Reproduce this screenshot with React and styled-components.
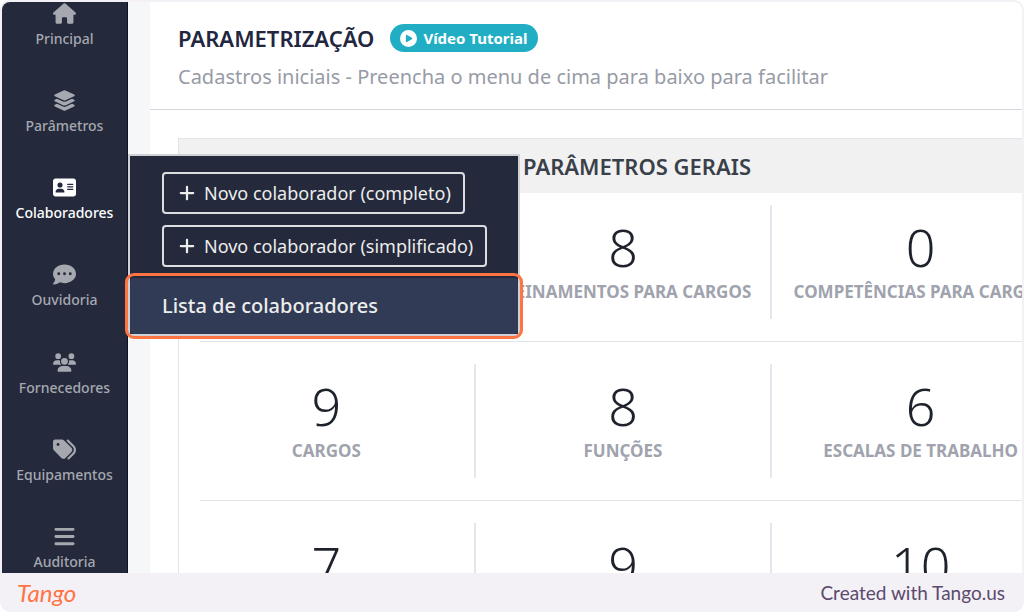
import React from "react";
import styled, { createGlobalStyle, css } from "styled-components";
import {
  FaAddressCard,
  FaBars,
  FaCirclePlay,
  FaCommentDots,
  FaHouse,
  FaLayerGroup,
  FaPlus,
  FaTags,
  FaUsers,
} from "react-icons/fa6";

const GlobalStyle = createGlobalStyle`
  * {
    box-sizing: border-box;
  }

  body {
    margin: 0;
    background: #fff;
    font-family: "Noto Sans", "Open Sans", sans-serif;
  }
`;

const Frame = styled.div`
  display: flex;
  flex-direction: column;
  height: 100vh;
  padding: 2px 2px 0;
  border-radius: 10px;
  overflow: hidden;
  background: #f3f0f6;
`;

const Screen = styled.div`
  position: relative;
  display: flex;
  flex: 1;
  min-height: 0;
  border-radius: 8px 8px 0 0;
  overflow: hidden;
  background: #f5f7f9;
`;

const Sidebar = styled.nav`
  display: flex;
  flex-direction: column;
  justify-content: space-between;
  flex: none;
  width: 126px;
  padding-bottom: 1px;
  background: #24293b;
  border-right: 1px solid #0d1130;
`;

const SidebarLink = styled.a`
  display: flex;
  flex-direction: column;
  align-items: center;
  gap: 4px;
  color: ${(props) => (props.$active ? "#fff" : "#a6a8b0")};
  font-size: 14px;
  font-weight: 500;
  line-height: 20px;
  text-decoration: none;

  svg {
    width: auto;
    height: 23px;
  }
`;

const Main = styled.main`
  flex: 1;
  min-width: 0;
  margin-left: 22px;
  overflow: hidden;
  background: #fff;
`;

const PageHeader = styled.header`
  padding: 22px 28px 18px;
  border-bottom: 1px solid #d3d6dc;
`;

const TitleRow = styled.div`
  display: flex;
  align-items: center;
  gap: 16px;
`;

const Title = styled.h1`
  margin: 0;
  color: #22263f;
  font-size: 22px;
  font-weight: 600;
  line-height: 28px;
`;

const TutorialButton = styled.button`
  display: flex;
  align-items: center;
  gap: 6px;
  height: 28px;
  padding: 0 10px;
  border: 0;
  border-radius: 14px;
  background: #21aec4;
  color: #fff;
  font-family: inherit;
  font-size: 15px;
  font-weight: 700;

  svg {
    width: 17px;
    height: 17px;
  }
`;

const Subtitle = styled.p`
  margin: 11px 0 0;
  color: #979ba6;
  font-size: 20px;
  line-height: 28px;
`;

const Card = styled.section`
  margin: 28px -74px 0 28px;
  border: 1px solid #e2e4ea;
`;

const CardTitle = styled.h2`
  margin: 0 0 12px;
  background: #f1f1f1;
  color: #3a4049;
  font-size: 22px;
  font-weight: 600;
  line-height: 54px;
  text-align: center;
`;

const StatRow = styled.div`
  display: grid;
  grid-template-columns: repeat(3, 1fr);
  padding-right: 26px;
`;

const Divider = styled.hr`
  margin: 22px 0 22px 21px;
  border: 0;
  border-top: 1px solid #e2e3e7;
`;

const Stat = styled.a`
  display: flex;
  flex-direction: column;
  align-items: center;
  height: 114px;
  padding-top: 12px;
  border-right: 2px solid #e6e7ee;
  text-decoration: none;
  white-space: nowrap;

  &:last-child {
    border-right: 0;
  }
`;

const StatValue = styled.span`
  color: #1e222b;
  font-size: 52px;
  font-weight: 350;
  line-height: 60px;
`;

const StatLabel = styled.span`
  margin-top: 2px;
  color: #a0a3ae;
  font-size: 17px;
  font-weight: 700;
  line-height: 26px;
`;

const Flyout = styled.div`
  position: absolute;
  top: 152px;
  left: 126px;
  width: 392px;
  border: 2px solid #cfd1d6;
  background: #24293b;
`;

const FlyoutActions = styled.div`
  display: flex;
  flex-direction: column;
  align-items: flex-start;
  gap: 11px;
  padding: 16px 32px 11px;
`;

const flyoutText = css`
  color: #eceded;
  font-family: inherit;
`;

const NewButton = styled.button`
  ${flyoutText}
  display: flex;
  align-items: center;
  gap: 8px;
  height: 42px;
  padding: 0 12px 0 14px;
  border: 2px solid #dcdde0;
  border-radius: 4px;
  background: transparent;
  font-size: 18px;
  white-space: nowrap;
`;

const ListLink = styled.a`
  ${flyoutText}
  display: block;
  padding: 0 32px;
  background: #323b55;
  font-size: 20px;
  font-weight: 500;
  line-height: 56px;
  text-decoration: none;
  outline: 3px solid #ff7442;
  outline-offset: 2px;
  border-radius: 4px;
`;

const Footer = styled.footer`
  display: flex;
  align-items: center;
  justify-content: space-between;
  flex: none;
  height: 39px;
  padding: 0 17px 0 15px;
`;

const Brand = styled.a`
  color: #ff7442;
  font-family: Lato, sans-serif;
  font-size: 24px;
  font-style: italic;
  font-weight: 400;
  line-height: 36px;
  text-decoration: none;
`;

const Credit = styled.span`
  color: #5b4a6d;
  font-family: Lato, sans-serif;
  font-size: 19px;
  line-height: 36px;
`;

const menu = [
  { label: "Principal", icon: FaHouse },
  { label: "Parâmetros", icon: FaLayerGroup },
  { label: "Colaboradores", icon: FaAddressCard, active: true },
  { label: "Ouvidoria", icon: FaCommentDots },
  { label: "Fornecedores", icon: FaUsers },
  { label: "Equipamentos", icon: FaTags },
  { label: "Auditoria", icon: FaBars },
];

const stats = [
  [
    { value: "", label: "" },
    { value: 8, label: "TREINAMENTOS PARA CARGOS" },
    { value: 0, label: "COMPETÊNCIAS PARA CARGOS" },
  ],
  [
    { value: 9, label: "CARGOS" },
    { value: 8, label: "FUNÇÕES" },
    { value: 6, label: "ESCALAS DE TRABALHO" },
  ],
  [
    { value: 7, label: "" },
    { value: 9, label: "" },
    { value: 10, label: "" },
  ],
];

const App = () => (
  <>
    <GlobalStyle />
    <Frame>
      <Screen>
        <Sidebar>
          {menu.map(({ label, icon: Icon, active }) => (
            <SidebarLink key={label} href="#" $active={active}>
              <Icon />
              {label}
            </SidebarLink>
          ))}
        </Sidebar>
        <Main>
          <PageHeader>
            <TitleRow>
              <Title>PARAMETRIZAÇÃO</Title>
              <TutorialButton type="button">
                <FaCirclePlay />
                Vídeo Tutorial
              </TutorialButton>
            </TitleRow>
            <Subtitle>
              Cadastros iniciais - Preencha o menu de cima para baixo para
              facilitar
            </Subtitle>
          </PageHeader>
          <Card>
            <CardTitle>PARÂMETROS GERAIS</CardTitle>
            {stats.map((row, i) => (
              <React.Fragment key={i}>
                {i > 0 && <Divider />}
                <StatRow>
                  {row.map(({ value, label }, j) => (
                    <Stat key={j} href="#">
                      <StatValue>{value}</StatValue>
                      <StatLabel>{label}</StatLabel>
                    </Stat>
                  ))}
                </StatRow>
              </React.Fragment>
            ))}
          </Card>
        </Main>
        <Flyout>
          <FlyoutActions>
            <NewButton type="button">
              <FaPlus />
              Novo colaborador (completo)
            </NewButton>
            <NewButton type="button">
              <FaPlus />
              Novo colaborador (simplificado)
            </NewButton>
          </FlyoutActions>
          <ListLink href="#">Lista de colaboradores</ListLink>
        </Flyout>
      </Screen>
      <Footer>
        <Brand href="#">Tango</Brand>
        <Credit>Created with Tango.us</Credit>
      </Footer>
    </Frame>
  </>
);

export default App;
